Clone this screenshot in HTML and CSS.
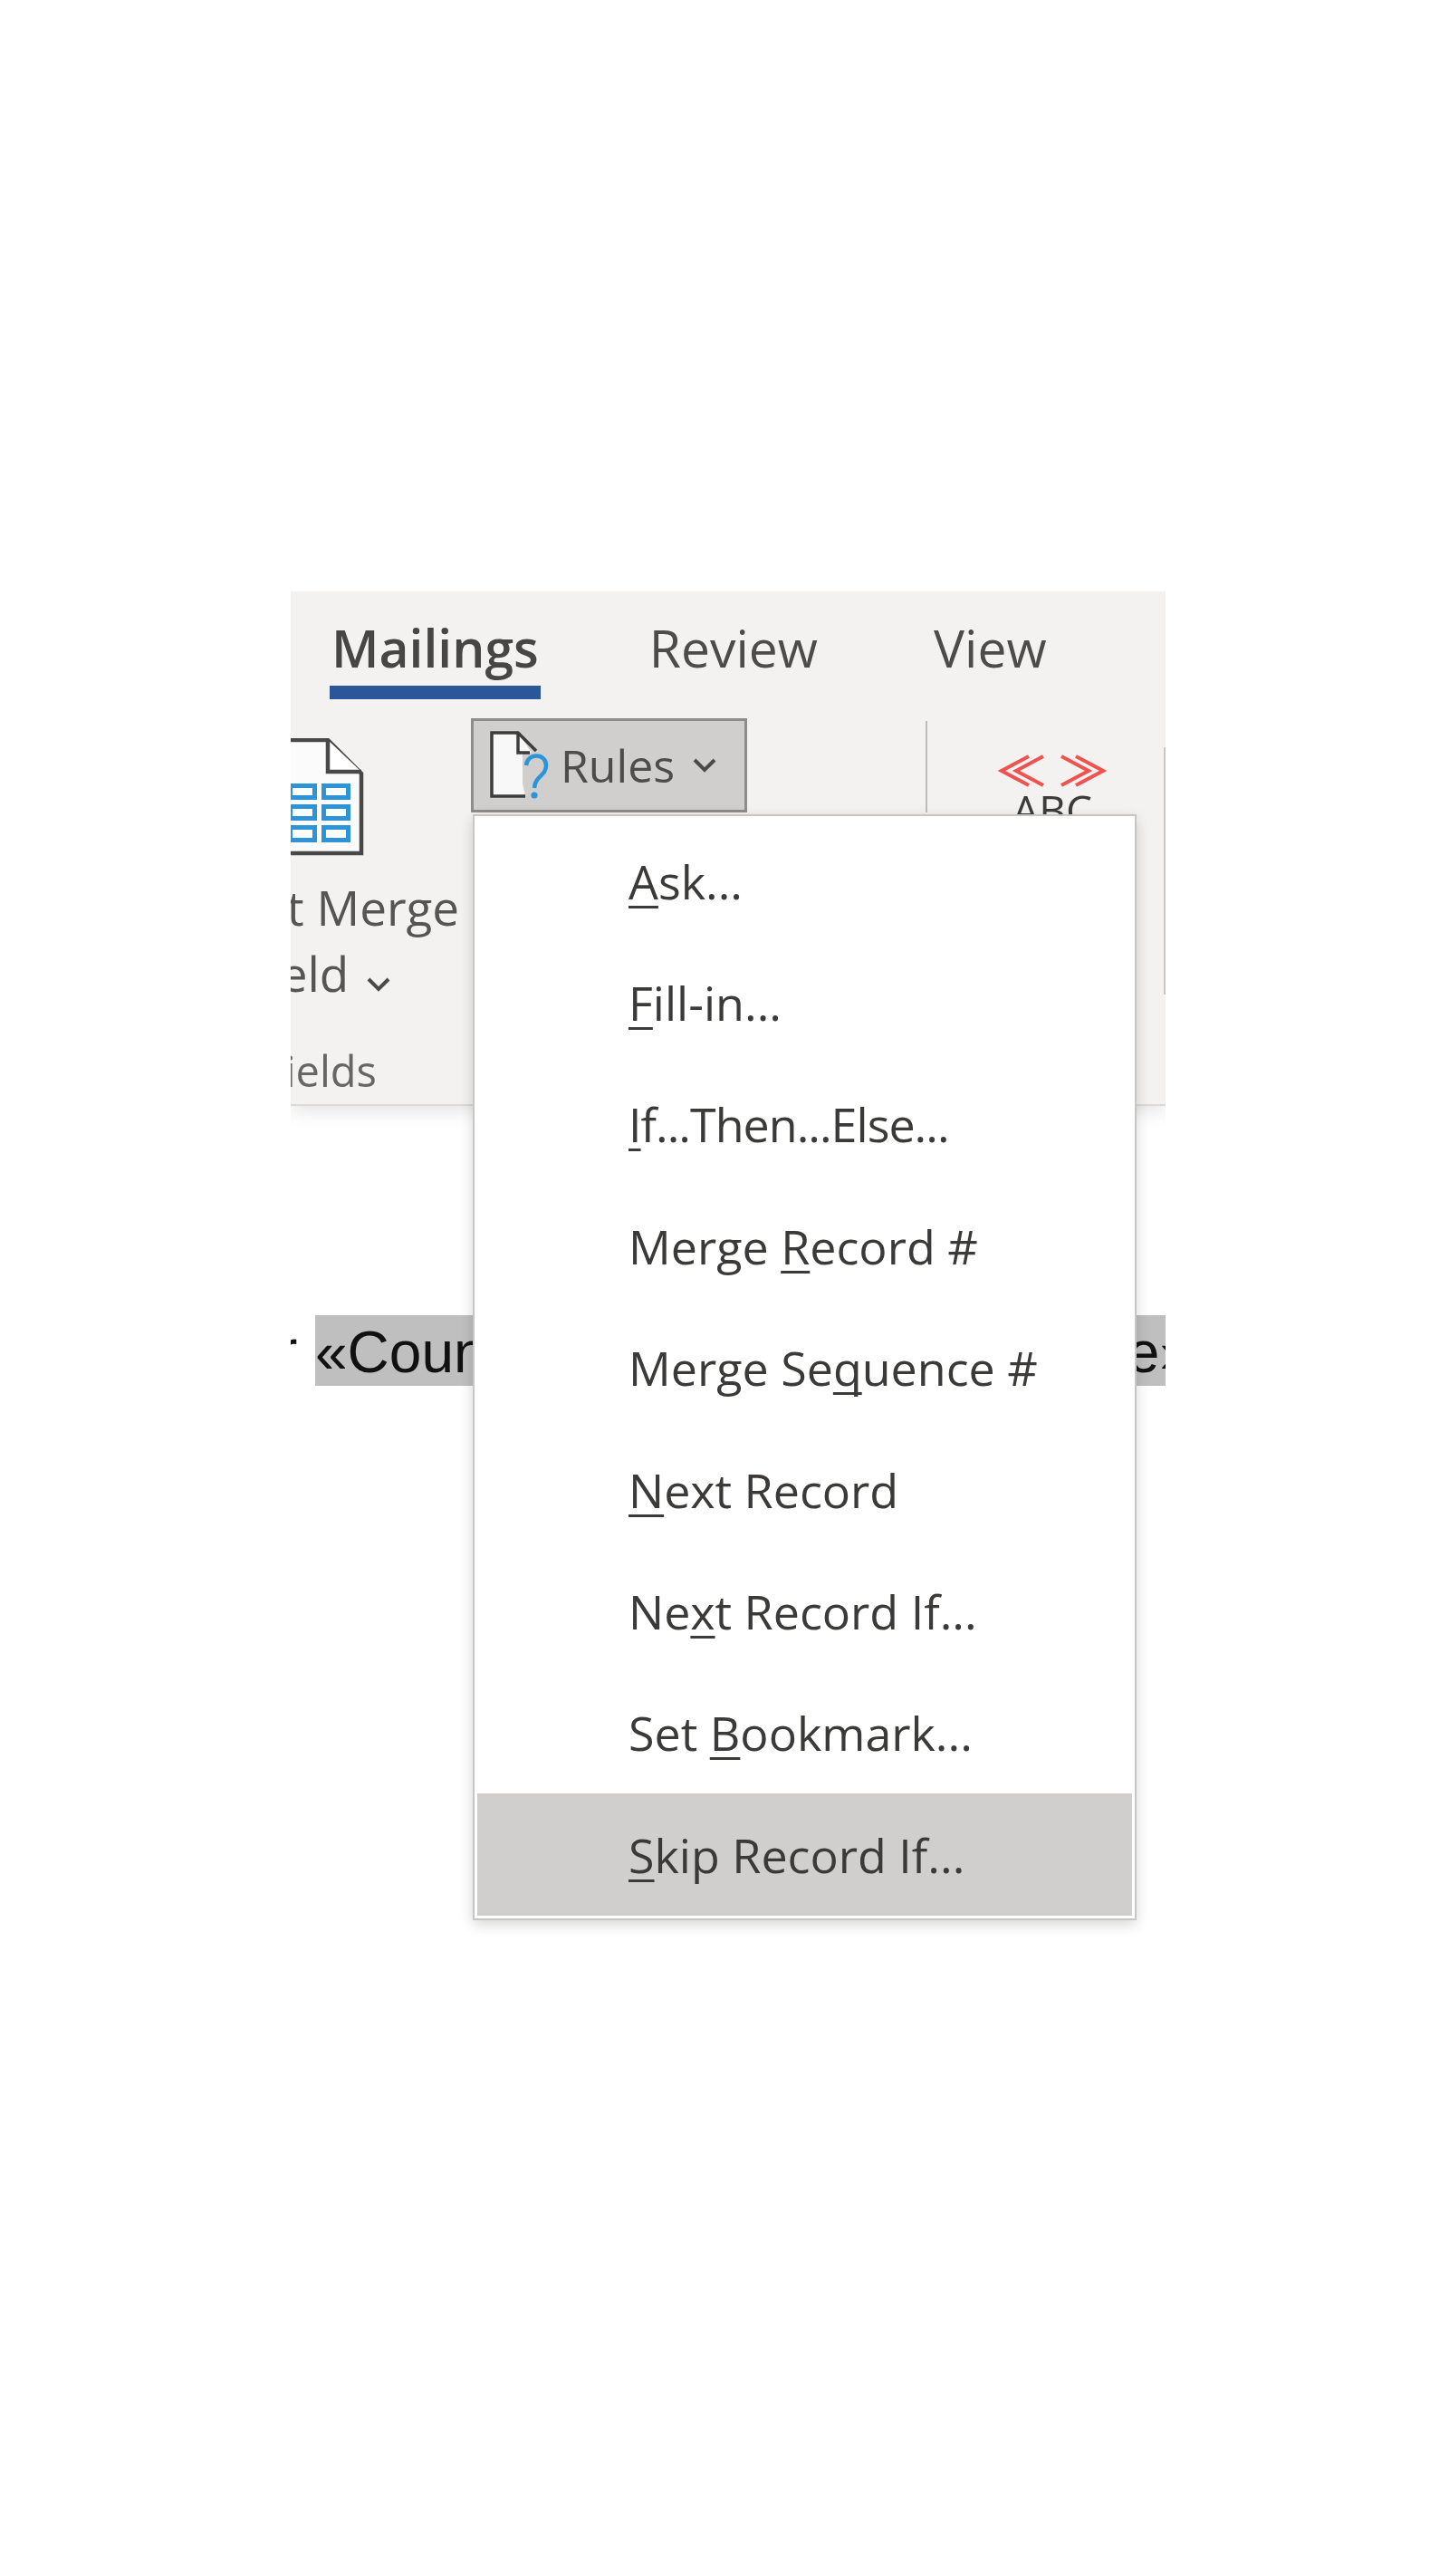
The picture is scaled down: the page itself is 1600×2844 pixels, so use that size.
FILE: index.html
```html
<!DOCTYPE html>
<html lang="en">
<head>
    <meta charset="UTF-8">
    <title>Mailings - Rules menu</title>
    <link rel="stylesheet" href="styles.css">
</head>
<body>
    <div class="shot">
        <div class="ribbon">
            <div class="tabs">
                <span class="tab active">Mailings</span>
                <span class="tab tab-review">Review</span>
                <span class="tab tab-view">View</span>
            </div>
            <div class="groups">
                <div class="group-insert">
                    <svg class="icon-insert" viewBox="0 0 110 130" width="110" height="130">
                        <path d="M2 2H70L107 39V127H2Z" fill="#fbfbfb" stroke="#484848" stroke-width="4.5"/>
                        <path d="M70 2V37H107" fill="#fff" stroke="#484848" stroke-width="4.5"/>
                        <g fill="#fff" stroke="#2e94d8" stroke-width="5">
                            <rect x="28.5" y="52.5" width="27" height="13"/>
                            <rect x="65.5" y="52.5" width="27" height="13"/>
                            <rect x="28.5" y="75.5" width="27" height="13"/>
                            <rect x="65.5" y="75.5" width="27" height="13"/>
                            <rect x="28.5" y="98.5" width="27" height="14"/>
                            <rect x="65.5" y="98.5" width="27" height="14"/>
                        </g>
                    </svg>
                    <div class="insert-label first">Insert Merge</div>
                    <div class="insert-label">Field <svg class="chev" viewBox="0 0 26 16" width="26" height="16"><path d="M2 2L13 13L24 2" fill="none" stroke="#4a4a4a" stroke-width="4"/></svg></div>
                    <div class="group-name"><span>Write &amp; Insert Fields</span></div>
                </div>
                <div class="group-rules">
                    <div class="rules-btn">
                        <svg class="icon-rules" viewBox="0 0 66 76" width="66" height="76">
                            <path d="M2 2H31L46 24H36V58L39 72H2Z" fill="#f8f8f8"/>
                            <path d="M39 72H2V2H31L51 22" fill="none" stroke="#3c3c3c" stroke-width="3.5"/>
                            <path d="M31 2V24H44" fill="none" stroke="#3c3c3c" stroke-width="3.5"/>
                            <path d="M40 38C41 24 62 24 62 38C62 50 50 49 49 63" fill="none" stroke="#2e94d8" stroke-width="4.5"/>
                            <circle cx="49" cy="71" r="3.6" fill="#2e94d8"/>
                        </svg>
                        <span class="rules-text">Rules</span>
                        <svg class="chev chev-rules" viewBox="0 0 26 16" width="26" height="16"><path d="M2 2L13 13L24 2" fill="none" stroke="#4a4a4a" stroke-width="4"/></svg>
                    </div>
                </div>
                <div class="sep"></div>
                <div class="group-preview">
                    <svg class="icon-preview" viewBox="0 0 120 36" width="120" height="36">
                        <g fill="none" stroke="#ef5350" stroke-width="4">
                            <path d="M34 2L4 18L34 34M50 2L20 18L50 34"/>
                            <path d="M70 2L100 18L70 34M86 2L116 18L86 34"/>
                        </g>
                    </svg>
                    <div class="abc">ABC</div>
                </div>
                <div class="sep sep-tall"></div>
            </div>
        </div>
        <div class="doc">
            <span class="doc-prefix">r</span>
            <span class="field"><span>«Country</span><span>e»</span></span>
        </div>
        <div class="menu">
            <div class="item"><span><u>A</u>sk...</span></div>
            <div class="item"><span><u>F</u>ill-in...</span></div>
            <div class="item"><span class="tight"><u>I</u>f...Then...Else...</span></div>
            <div class="item"><span>Merge <u>R</u>ecord #</span></div>
            <div class="item"><span>Merge Se<u>q</u>uence #</span></div>
            <div class="item"><span><u>N</u>ext Record</span></div>
            <div class="item"><span>Ne<u>x</u>t Record If...</span></div>
            <div class="item"><span>Set <u>B</u>ookmark...</span></div>
            <div class="item selected"><span><u>S</u>kip Record If...</span></div>
        </div>
    </div>
</body>
</html>
```

FILE: styles.css
```css
body {
    margin: 0;
    background-color: #fff;
    font-family: "Open Sans", sans-serif;
    color: #444;
}

.shot {
    position: relative;
    width: 966px;
    height: 1500px;
    margin: 653px 0 0 321px;
    overflow: hidden;
    filter: blur(0.7px);
}

.ribbon {
    height: 566px;
    background-color: #f3f2f1;
    border-bottom: 2px solid #dcdad8;
    box-shadow: 0 4px 22px rgba(0, 0, 0, 0.13);
    overflow: hidden;
}

.tabs {
    display: flex;
    height: 140px;
    font-size: 57px;
    line-height: 72px;
    padding: 26px 0 0 43px;
    box-sizing: border-box;
}

.tab {
    color: #4d4c4b;
}

.tab.active {
    height: 93px;
    padding: 0 2px;
    font-weight: 600;
    color: #484644;
    border-bottom: 15px solid #2b579a;
    box-sizing: border-box;
}

.tab-review { margin-left: 120px; }
.tab-view { margin-left: 128px; }

.groups {
    display: flex;
    align-items: flex-start;
}

.group-insert {
    flex: none;
    width: 320px;
    margin-left: -131px;
    padding-top: 22px;
    text-align: center;
}

.icon-insert {
    display: block;
    margin: 0 0 0 102px;
}

.insert-label {
    font-size: 53px;
    line-height: 73px;
    white-space: nowrap;
    color: #555;
}

.insert-label.first {
    margin-top: 20px;
}

.group-name {
    display: flex;
    justify-content: flex-end;
    padding-right: 94px;
    font-size: 47px;
    line-height: 60px;
    margin-top: 41px;
    white-space: nowrap;
    color: #666;
}

.group-name span {
    flex: none;
}

.chev {
    margin-left: 6px;
}

.group-rules {
    flex: none;
    width: 502px;
    margin-left: 10px;
}

.rules-btn {
    display: flex;
    align-items: center;
    width: 305px;
    height: 104px;
    box-sizing: border-box;
    border: 3px solid #8e8d8b;
    background-color: #d0cfcd;
    padding-left: 18px;
}

.rules-text {
    font-size: 50px;
    margin-left: 12px;
    color: #4d4c4b;
}

.chev-rules {
    margin-left: 20px;
}

.icon-rules {
    flex: none;
}

.sep {
    flex: none;
    width: 2px;
    height: 101px;
    margin-top: 3px;
    background-color: #bdbcba;
}

.group-preview {
    flex: none;
    box-sizing: border-box;
    width: 261px;
    padding-top: 40px;
    padding-left: 15px;
    text-align: center;
}

.icon-preview {
    display: block;
    margin: 0 auto;
}

.abc {
    font-size: 46px;
    line-height: 50px;
    color: #3c3c3c;
}

.sep-tall {
    width: 3px;
    height: 273px;
    margin-top: 32px;
    background-color: #c8c6c4;
}

.doc {
    display: flex;
    align-items: flex-start;
    padding-top: 231px;
    font-family: "Liberation Sans", sans-serif;
    font-size: 64px;
    line-height: 78px;
    color: #111;
}

.doc-prefix {
    width: 27px;
    margin-left: -14px;
    flex: none;
    margin-right: 14px;
}

.field {
    flex: none;
    display: flex;
    justify-content: space-between;
    width: 968px;
    line-height: 82px;
    height: 78px;
    background-color: #bfbfbf;
}

.menu {
    position: absolute;
    left: 201px;
    top: 246px;
    width: 733px;
    box-sizing: border-box;
    padding: 4px 3px 3px;
    background-color: #fff;
    border: 2px solid #c8c6c4;
    box-shadow: 0 5px 14px rgba(0, 0, 0, 0.16);
}

.item {
    display: flex;
    align-items: center;
    height: 134.4px;
    padding-left: 167px;
    font-size: 52px;
    color: #3b3a39;
}

.item.selected {
    background-color: #d0cfcd;
}

.item .tight {
    letter-spacing: -1px;
}

.item u {
    text-decoration-thickness: 3px;
    text-underline-offset: 7px;
    text-decoration-skip-ink: none;
}
```
